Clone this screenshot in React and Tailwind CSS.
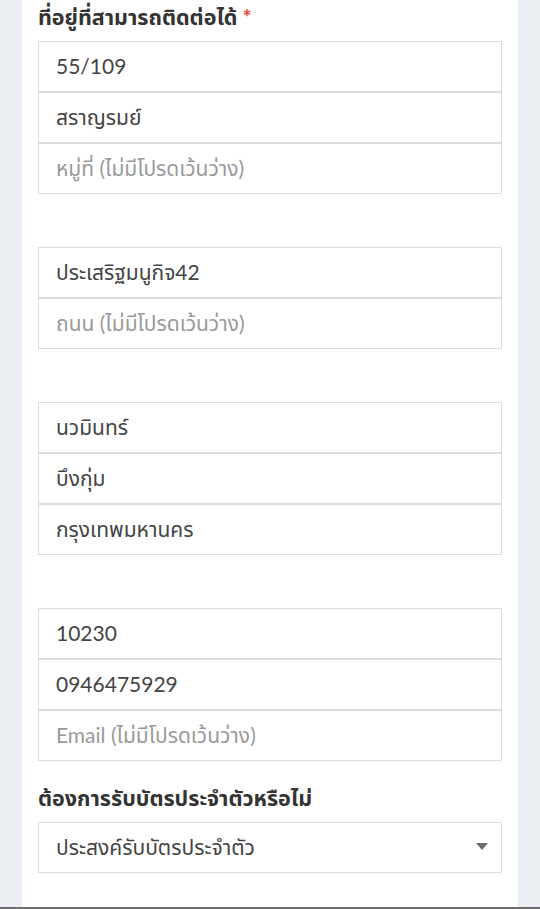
import React from "react";

const font = { fontFamily: 'Lato, "Noto Sans Thai", "Noto Sans", "DejaVu Sans", sans-serif' };

const groups = [
  [
    { value: "55/109" },
    { value: "สราญรมย์" },
    { placeholder: "หมู่ที่ (ไม่มีโปรดเว้นว่าง)" },
  ],
  [
    { value: "ประเสริฐมนูกิจ42" },
    { placeholder: "ถนน (ไม่มีโปรดเว้นว่าง)" },
  ],
  [
    { value: "นวมินทร์" },
    { value: "บึงกุ่ม" },
    { value: "กรุงเทพมหานคร" },
  ],
  [
    { value: "10230" },
    { value: "0946475929" },
    { placeholder: "Email (ไม่มีโปรดเว้นว่าง)" },
  ],
];

export default function App() {
  return (
    <div className="flex flex-col h-[909px] bg-[#ebeef3] overflow-hidden" style={font}>
      <div className="flex-1 mx-[22px] bg-white px-4">
        <div className="h-[41px] pt-[1px] text-[21.5px] leading-[32px] font-bold text-[#333]">
          ที่อยู่ที่สามารถติดต่อได้ <span className="text-[#e2483b]">*</span>
        </div>

        <div className="flex flex-col gap-[53px]">
          {groups.map((g, i) => (
            <div key={i} className="flex flex-col">
              {g.map((f, j) => (
                <Field key={j} {...f} />
              ))}
            </div>
          ))}
        </div>

        <div className="mt-[21px] h-[40px] text-[21.5px] leading-[32px] font-bold text-[#333]">
          ต้องการรับบัตรประจำตัวหรือไม่
        </div>
        <div className="flex items-center justify-between h-[51px] border border-[#dcdcdc] pl-[17px] pr-[13px] pb-[2px] text-[21px] text-[#444]">
          <span>ประสงค์รับบัตรประจำตัว</span>
          <svg width="12" height="8" viewBox="0 0 12 8">
            <path d="M0 0 L12 0 L6 7 Z" fill="#6b6b6b" />
          </svg>
        </div>
      </div>
      <div className="h-[2px] bg-[#6e6e6e]" />
    </div>
  );
}

function Field({ value, placeholder }) {
  return (
    <div className="flex items-center h-[51px] border border-[#dcdcdc] px-[17px] pb-[2px] text-[21px]">
      {value ? (
        <span className="text-[#444]">{value}</span>
      ) : (
        <span className="text-[#9a9a9a]">{placeholder}</span>
      )}
    </div>
  );
}
